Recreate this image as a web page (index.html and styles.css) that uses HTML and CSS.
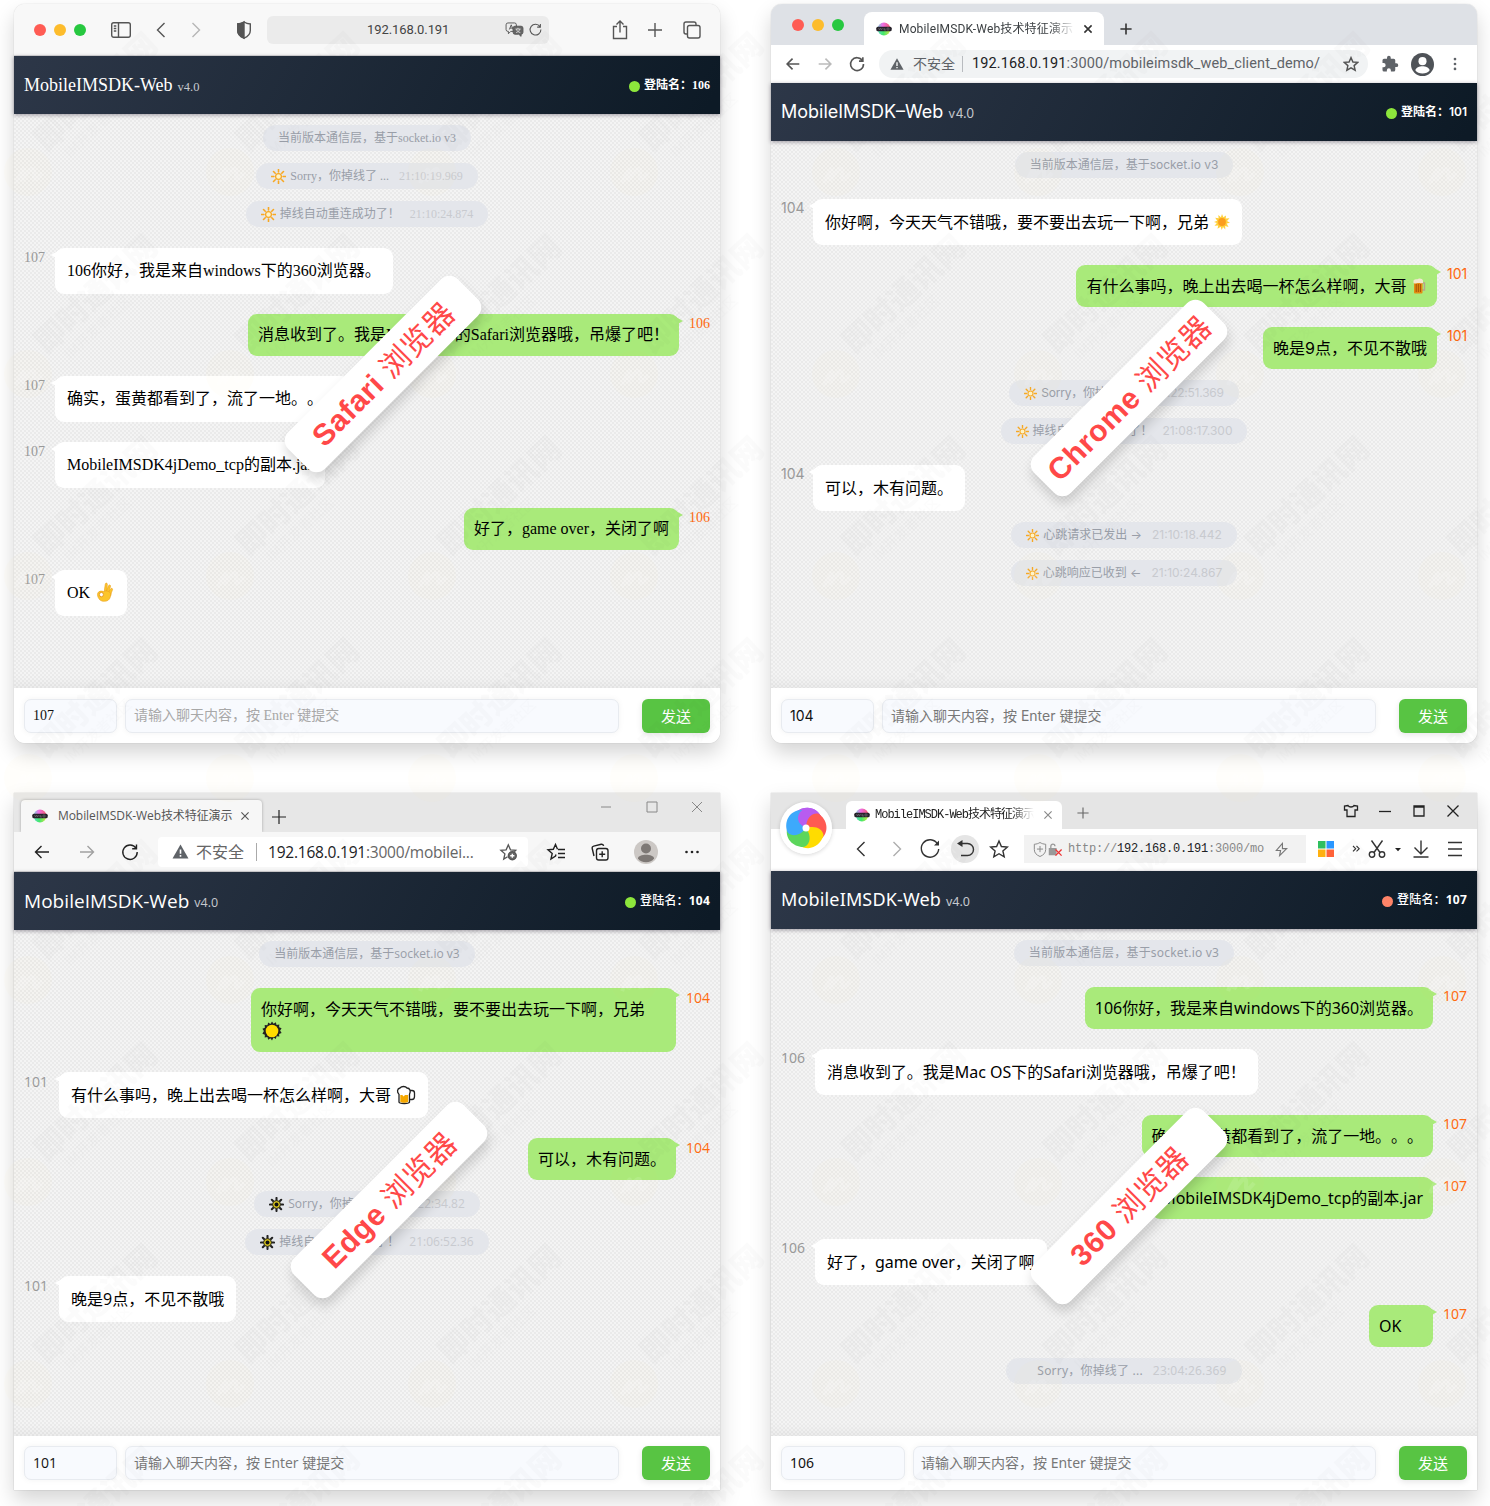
FILE: index.html
```html
<!DOCTYPE html>
<html lang="zh-CN">
<head>
<meta charset="utf-8">
<title>MobileIMSDK-Web技术特征演示</title>
<link rel="stylesheet" href="styles.css">
</head>
<body>
<svg class="defs" width="0" height="0">
  <defs>
    <linearGradient id="favtop" x1="0" y1="0" x2="1" y2="0"><stop offset="0" stop-color="#7fd0d8"/><stop offset=".4" stop-color="#ee6fe6"/><stop offset="1" stop-color="#f0586a"/></linearGradient>
    <linearGradient id="favbot" x1="0" y1="0" x2="1" y2="0"><stop offset="0" stop-color="#5fd9c8"/><stop offset=".45" stop-color="#43e86a"/><stop offset="1" stop-color="#d6e64a"/></linearGradient>
    <symbol id="favicon" viewBox="0 0 16 16"><g stroke="none"><path d="M1.500 8a6.500 6.500 0 0 1 13 0z" fill="url(#favtop)"/><path d="M1.500 8a6.500 6.500 0 0 0 13 0z" fill="url(#favbot)"/><rect x=".3" y="5.700" width="15.400" height="4.600" rx="1.500" fill="#26222a"/></g><path d="M2.500 7l1 2 1-2 1 2 1-2M8 7v2h2M8 8h1.500M11 7v2h2v-2z" stroke="#77737b" stroke-width=".6" fill="none"/></symbol>
    <symbol id="x" viewBox="0 0 20 20"><path d="M5.500 5.500l9 9M14.500 5.500l-9 9"/></symbol>
    <symbol id="plus" viewBox="0 0 20 20"><path d="M10 3v14M3 10h14"/></symbol>
    <symbol id="lt" viewBox="0 0 20 20"><path d="M13.500 3L6.500 10l7 7"/></symbol>
    <symbol id="gt" viewBox="0 0 20 20"><path d="M6.500 3l7 7-7 7"/></symbol>
    <symbol id="back" viewBox="0 0 20 20"><path d="M17 10H3.500M9.500 4l-6 6 6 6"/></symbol>
    <symbol id="fwd" viewBox="0 0 20 20"><path d="M3 10h13.500M10.500 4l6 6-6 6"/></symbol>
    <symbol id="reload" viewBox="0 0 20 20"><path d="M16 6.200A7.200 7.200 0 1 0 17.200 10M16.500 2.500v4.300h-4.300"/></symbol>
    <symbol id="star" viewBox="0 0 20 20"><path d="M10 2l2.400 5.500 6 .5-4.500 4 1.300 5.800L10 14.700l-5.200 3.100L6.100 12 1.600 8l6-.5z"/></symbol>
    <symbol id="warn" viewBox="0 0 16 16"><path d="M8 1.500L15.500 14.500H.5z" fill="#5f6368" stroke="none"/><path d="M8 6v4.200M8 11.400v1.500" stroke="#fff" stroke-width="1.500"/></symbol>
    <symbol id="glow" viewBox="0 0 16 16"><circle cx="8" cy="8" r="3.100" fill="#fdf3c8" stroke="#f7a823" stroke-width="1.300"/><path d="M8 .5v2.600M8 12.900v2.600M.5 8h2.600M12.900 8h2.600M2.700 2.700l1.800 1.800M11.500 11.500l1.800 1.800M13.300 2.700l-1.800 1.800M4.500 11.500l-1.800 1.800" stroke="#f7a823" stroke-width="1.700" stroke-linecap="round"/></symbol>
    <symbol id="glowdark" viewBox="0 0 16 16"><path d="M8 1v14M1 8h14M3 3l10 10M13 3L3 13" stroke="#222" stroke-width="2.200" stroke-linecap="round"/><circle cx="8" cy="8" r="4.200" fill="#d8c41a" stroke="#222"/><circle cx="8" cy="8" r="2.100" fill="#111"/></symbol>
  </defs>
</svg>

<main class="board">

  <!-- Safari -->
  <section class="win safari round">
    <div class="bar safari-bar">
      <div class="lights"><i class="r"></i><i class="y"></i><i class="g"></i></div>
      <svg class="ic" viewBox="0 0 20 20"><rect x=".7" y="2.700" width="18.600" height="14.600" rx="2"/><path d="M7.500 3v14M2.800 6h2.500M2.800 8.500h2.500M2.800 11h2.500"/></svg>
      <svg class="ic"><use href="#lt"/></svg>
      <svg class="ic dim"><use href="#gt"/></svg>
      <svg class="ic" viewBox="0 0 20 20"><path d="M10 2c2 1.200 4 1.800 6.300 2v6.500c0 3.500-2.500 6-6.300 7.700-3.800-1.700-6.300-4.200-6.300-7.700V4C6 3.800 8 3.200 10 2z"/><path d="M10 2v16.200c-3.800-1.700-6.300-4.200-6.300-7.700V4C6 3.800 8 3.200 10 2z" fill="#555"/></svg>
      <div class="url">
        <span>192.168.0.191</span>
        <svg class="tr" viewBox="0 0 20 16"><path d="M3 1h7a2 2 0 0 1 2 2v5a2 2 0 0 1-2 2H6l-2.500 2.500V10H3a2 2 0 0 1-2-2V3a2 2 0 0 1 2-2zM4.500 8l2-5 2 5M5.200 6.500h2.600"/><path d="M10.500 4.500h6.500a2 2 0 0 1 2 2v4.500a2 2 0 0 1-2 2v2.300L14.500 13h-4a2 2 0 0 1-2-2V6.500a2 2 0 0 1 2-2z" fill="#666"/><path d="M11 7.500h5.500M13.700 6.200v1.300M15.700 7.500c-.5 2-2 3-4 3.800M12 7.700c.5 1.800 2 3 4.200 3.600" stroke="#eee" stroke-width=".8"/></svg>
        <svg class="rl"><use href="#reload"/></svg>
      </div>
      <svg class="ic" viewBox="0 0 20 20"><path d="M7 6.500H3.500v12h13v-12H13M10 12.500V1.500M6.500 4.500L10 1l3.500 3.500"/></svg>
      <svg class="ic"><use href="#plus"/></svg>
      <svg class="ic" viewBox="0 0 20 20"><rect x="5.500" y="5.500" width="12.500" height="12.500" rx="2"/><path d="M5.500 14H4a2 2 0 0 1-2-2V4a2 2 0 0 1 2-2h8a2 2 0 0 1 2 2v1.500"/></svg>
    </div>
    <header class="top"><h1>MobileIMSDK-Web</h1><small>v4.0</small><div class="who"><i></i>登陆名：<b>106</b></div></header>
    <div class="chat">
      <div class="note">当前版本通信层，基于socket.io v3</div>
      <div class="note"><svg><use href="#glow"/></svg>Sorry，你掉线了 ...<time>21:10:19.969</time></div>
      <div class="note"><svg><use href="#glow"/></svg>掉线自动重连成功了！<time>21:10:24.874</time></div>
      <div class="msg in"><span>107</span><p>106你好，我是来自windows下的360浏览器。</p></div>
      <div class="msg out"><p>消息收到了。我是Mac OS下的Safari浏览器哦，吊爆了吧！</p><span>106</span></div>
      <div class="msg in"><span>107</span><p>确实，蛋黄都看到了，流了一地。。。</p></div>
      <div class="msg in"><span>107</span><p>MobileIMSDK4jDemo_tcp的副本.jar</p></div>
      <div class="msg out"><p>好了，game over，关闭了啊</p><span>106</span></div>
      <div class="msg in"><span>107</span><p>OK <svg class="em" viewBox="0 0 20 20"><g fill="#fcc52b" stroke="#e9a01f" stroke-width=".6" stroke-linejoin="round"><path d="M9.200 9.500L10.300 2c.3-1.300 2-1.200 2 .2L12 9z"/><path d="M11.300 9.500L13.600 3.600c.6-1.200 2.200-.6 1.900.7L14 10.500z"/><path d="M13 10.500l2.800-3.700c.8-1 2.200-.1 1.700 1-.9 2-1.500 4-1.800 6z"/><path d="M8.500 9.500c2-.9 4.700-.8 6.500.8.900 1 .8 3 .3 4.700-.8 3-3 4.300-6 4.300-2.600 0-4.600-.9-5.500-2.800-1-1.500-1.800-3.700-1-5.500C3.800 9 6.300 8.700 8.500 9.500z"/></g><ellipse cx="6.400" cy="12.600" rx="2" ry="2.200" fill="#fff" stroke="#e08e19" stroke-width=".8"/></svg></p></div>
    </div>
    <footer class="send"><div class="f id">107</div><div class="f text">请输入聊天内容，按 Enter 键提交</div><button>发送</button></footer>
    <div class="tag"><b>Safari</b> 浏览器</div>
  </section>

  <!-- Chrome -->
  <section class="win chrome round">
    <div class="tabs chrome-tabs">
      <div class="lights"><i class="r"></i><i class="y"></i><i class="g"></i></div>
      <div class="tab"><svg class="fi"><use href="#favicon"/></svg><span class="fade">MobileIMSDK-Web技术特征演示</span><svg class="cl"><use href="#x"/></svg></div>
      <svg class="add"><use href="#plus"/></svg>
    </div>
    <div class="bar chrome-bar">
      <svg class="ic"><use href="#back"/></svg>
      <svg class="ic dim"><use href="#fwd"/></svg>
      <svg class="ic"><use href="#reload"/></svg>
      <div class="url"><svg class="wn"><use href="#warn"/></svg><em>不安全</em><span><b>192.168.0.191</b>:3000/mobileimsdk_web_client_demo/</span><svg class="st"><use href="#star"/></svg></div>
      <svg class="ic" viewBox="0 0 24 24"><path d="M20.500 11H19V7a2 2 0 0 0-2-2h-4V3.500a2.500 2.500 0 0 0-5 0V5H4a2 2 0 0 0-2 2v3.800h1.500a2.700 2.700 0 0 1 0 5.400H2V20a2 2 0 0 0 2 2h3.800v-1.500a2.700 2.700 0 0 1 5.400 0V22H17a2 2 0 0 0 2-2v-4h1.500a2.500 2.500 0 0 0 0-5z" fill="#5f6368" stroke="none"/></svg>
      <svg class="ic av" viewBox="0 0 24 24"><circle cx="12" cy="12" r="12" fill="#4f5358" stroke="none"/><circle cx="12" cy="8.500" r="4.200" fill="#fff" stroke="none"/><path d="M4.500 18c1.500-5.500 13.500-5.500 15 0-3 4.500-12 4.500-15 0z" fill="#fff" stroke="none"/></svg>
      <svg class="ic" viewBox="0 0 20 20"><g fill="#5f6368" stroke="none"><circle cx="10" cy="4.500" r="1.500"/><circle cx="10" cy="10" r="1.500"/><circle cx="10" cy="15.500" r="1.500"/></g></svg>
    </div>
    <header class="top"><h1>MobileIMSDK–Web</h1><small>v4.0</small><div class="who"><i></i>登陆名：<b>101</b></div></header>
    <div class="chat">
      <div class="note">当前版本通信层，基于socket.io v3</div>
      <div class="msg in"><span>104</span><p>你好啊，今天天气不错哦，要不要出去玩一下啊，兄弟 <svg class="em sm" viewBox="0 0 16 16"><path d="M8 0l1.300 3.200L12 1.500l-.3 3.100 3.800-.3L13 7l3 1.700-3.300.9 1.800 3.400-3.300-1 .1 3.500L9 13l-1.300 3-1-3.200-3.200 2 .7-3.400-3.700.4 2.400-2.700L0 8l3.200-1.300L1.200 3.800l3.400.5L4.300 1l2.600 2.200z" fill="#ffd03c"/><circle cx="8" cy="8" r="3.900" fill="#fb9d1d"/></svg></p></div>
      <div class="msg out"><p>有什么事吗，晚上出去喝一杯怎么样啊，大哥 <svg class="em sm" viewBox="0 0 16 16"><path d="M11 5h2.500v7H11" fill="none" stroke="#b9a38c" stroke-width="1.400"/><rect x="3" y="3.500" width="8.500" height="12" rx="1" fill="#e38c12"/><path d="M5.200 6v8M7.300 6v8M9.400 6v8" stroke="#a64d06" stroke-width="1"/><path d="M2.500 5V2.500C4 .5 5.500 1.500 7 1c2-1 4.500-.3 5 1.500V5c-2 1-2.500-.5-5 0-2 .5-3 .8-4.500 0z" fill="#f3e7cf"/></svg></p><span>101</span></div>
      <div class="msg out"><p>晚是9点，不见不散哦</p><span>101</span></div>
      <div class="note tight"><svg><use href="#glow"/></svg>Sorry，你掉线了 ...<time>20:22:51.369</time></div>
      <div class="note"><svg><use href="#glow"/></svg>掉线自动重连成功了！<time>21:08:17.300</time></div>
      <div class="msg in"><span>104</span><p>可以，木有问题。</p></div>
      <div class="note"><svg><use href="#glow"/></svg>心跳请求已发出 →<time>21:10:18.442</time></div>
      <div class="note"><svg><use href="#glow"/></svg>心跳响应已收到 ←<time>21:10:24.867</time></div>
    </div>
    <footer class="send"><div class="f id">104</div><div class="f text">请输入聊天内容，按 Enter 键提交</div><button>发送</button></footer>
    <div class="tag"><b>Chrome</b> 浏览器</div>
  </section>

  <!-- Edge -->
  <section class="win edge">
    <div class="tabs edge-tabs">
      <div class="tab"><svg class="fi"><use href="#favicon"/></svg><span>MobileIMSDK-Web技术特征演示</span><svg class="cl"><use href="#x"/></svg></div>
      <svg class="add"><use href="#plus"/></svg>
      <div class="ctl">
        <svg viewBox="0 0 20 20"><path d="M5 10h10"/></svg>
        <svg viewBox="0 0 20 20"><path d="M5 5h10v10H5z"/></svg>
        <svg viewBox="0 0 20 20"><path d="M5 5l10 10M15 5L5 15"/></svg>
      </div>
    </div>
    <div class="bar edge-bar">
      <svg class="ic"><use href="#back"/></svg>
      <svg class="ic dim"><use href="#fwd"/></svg>
      <svg class="ic"><use href="#reload"/></svg>
      <div class="url"><svg class="wn"><use href="#warn"/></svg><em>不安全</em><span><b>192.168.0.191</b>:3000/mobilei...</span><svg class="st" viewBox="0 0 20 20"><path d="M9 15.500L5 18l1.200-5.500L2 8.800l5.500-.5L9.800 3l2.300 5.300 5.500.5-1.500 1.500"/><circle cx="14" cy="14.500" r="4.200" fill="#666"/><path d="M14 12.300v4.400M11.800 14.500h4.400" stroke="#fff"/></svg></div>
      <svg class="ic" viewBox="0 0 20 20"><path d="M10 12.500l-.5 1.500-4.500 3 1.200-5.500L2 7.800l5.300-.5L9.500 2.500l2 4.800M12 7.500h7M12 11.500h7M12 15.500h7"/></svg>
      <svg class="ic" viewBox="0 0 20 20"><rect x="6.500" y="6.500" width="11.500" height="11.500" rx="2.200"/><path d="M12.200 9.300v6M9.200 12.300h6M4 14l-1.800-7.500a2 2 0 0 1 1.500-2.400l7.500-1.800a2 2 0 0 1 2.400 1.600"/></svg>
      <svg class="ic av" viewBox="0 0 24 24"><circle cx="12" cy="12" r="12" fill="#ccc8c5" stroke="none"/><circle cx="12" cy="8.500" r="5" fill="#7d7875" stroke="none"/><path d="M4 18.500c0-5 16-5 16 0-3 5-13 5-16 0z" fill="#7d7875" stroke="none"/></svg>
      <svg class="ic" viewBox="0 0 20 20"><g fill="#222" stroke="none"><circle cx="4.500" cy="10" r="1.300"/><circle cx="10" cy="10" r="1.300"/><circle cx="15.500" cy="10" r="1.300"/></g></svg>
    </div>
    <header class="top"><h1>MobileIMSDK-Web</h1><small>v4.0</small><div class="who"><i></i>登陆名：<b>104</b></div></header>
    <div class="chat">
      <div class="note">当前版本通信层，基于socket.io v3</div>
      <div class="msg out"><p>你好啊，今天天气不错哦，要不要出去玩一下啊，兄弟 <br><svg class="em" viewBox="0 0 20 20"><path d="M10 .5l1.600 2.200 2.200-1.500.8 2.700 2.700-.3-.2 2.700 2.500 1-1.500 2.300 1.500 2.300-2.500 1 .2 2.700-2.700-.3-.8 2.700-2.200-1.500L10 19.500l-1.600-2.200-2.200 1.500-.8-2.700-2.700.3.200-2.700-2.500-1L1.900 10 .4 7.700l2.500-1-.2-2.700 2.700.3.800-2.700 2.200 1.500z" fill="#222"/><circle cx="10" cy="10" r="6.300" fill="#ffdb00"/></svg></p><span>104</span></div>
      <div class="msg in"><span>101</span><p>有什么事吗，晚上出去喝一杯怎么样啊，大哥 <svg class="em" viewBox="0 0 20 20"><path d="M13.500 5.500H16c1.500 0 2.500 1 2.500 2.500v3.500c0 2-1 3-2.500 3h-2.500" fill="none" stroke="#222" stroke-width="1.300"/><path d="M3 7v10c0 2 10.500 2 10.500 0V7z" fill="#fff" stroke="#222" stroke-width="1.300"/><path d="M4.300 10h2l1.300 1.500L9 10h3.200v7c-2 .9-6 .9-7.900 0z" fill="#f5a800"/><path d="M3 9C.8 7.500 1 3.500 4 3c1.500-2 5.500-2 7 0 3 0 4 3.500 2.500 6" fill="#fff" stroke="#222" stroke-width="1.300"/></svg></p></div>
      <div class="msg out"><p>可以，木有问题。</p><span>104</span></div>
      <div class="note"><svg><use href="#glowdark"/></svg>Sorry，你掉线了 ...<time>20:22:34.82</time></div>
      <div class="note"><svg><use href="#glowdark"/></svg>掉线自动重连成功了！<time>21:06:52.36</time></div>
      <div class="msg in"><span>101</span><p>晚是9点，不见不散哦</p></div>
    </div>
    <footer class="send"><div class="f id">101</div><div class="f text">请输入聊天内容，按 Enter 键提交</div><button>发送</button></footer>
    <div class="tag"><b>Edge</b> 浏览器</div>
  </section>

  <!-- 360 -->
  <section class="win q360">
    <svg class="logo" viewBox="-26 -26 52 52"><circle r="26" fill="#fff"/>
      <path id="petal" d="M0 0C-9-3-13-10-10-16-2-23 12-22 16-9 9-14 1-10 0 0z" fill="#b85cf0"/>
      <use href="#petal" class="p2"/>
      <path d="M0 0C-9-3-13-10-10-16-2-23 12-22 16-9 9-14 1-10 0 0z" fill="#ff5a52" transform="rotate(72)"/>
      <path d="M0 0C-9-3-13-10-10-16-2-23 12-22 16-9 9-14 1-10 0 0z" fill="#ffdc00" transform="rotate(144)"/>
      <path d="M0 0C-9-3-13-10-10-16-2-23 12-22 16-9 9-14 1-10 0 0z" fill="#5cd65c" transform="rotate(216)"/>
      <path d="M0 0C-9-3-13-10-10-16-2-23 12-22 16-9 9-14 1-10 0 0z" fill="#3da9fc" transform="rotate(288)"/>
      <circle r="3.500" fill="#fff"/></svg>
    <div class="tabs q-tabs">
      <div class="tab"><svg class="fi"><use href="#favicon"/></svg><span class="fade">MobileIMSDK-Web技术特征演示</span><svg class="cl"><use href="#x"/></svg></div>
      <svg class="add"><use href="#plus"/></svg>
      <div class="ctl">
        <svg viewBox="0 0 20 20"><path d="M7 4.500L3.500 5v4H6v6.500h8V9h2.500V5L13 4.500c-1 2-5 2-6 0z"/></svg>
        <svg viewBox="0 0 20 20"><path d="M4 10.500h12"/></svg>
        <svg viewBox="0 0 20 20"><path d="M5 5h10v10H5zM5 6h10"/></svg>
        <svg viewBox="0 0 20 20"><path d="M4.500 4.500l11 11M15.500 4.500l-11 11"/></svg>
      </div>
    </div>
    <div class="bar q-bar">
      <svg class="ic"><use href="#lt"/></svg>
      <svg class="ic dim"><use href="#gt"/></svg>
      <svg class="ic" viewBox="0 0 20 20"><path d="M17.500 5A8.700 8.700 0 1 0 18.700 10"/><path d="M19 1.500v5h-5z" fill="#333" stroke="none"/></svg>
      <svg class="ic undo" viewBox="0 0 20 20"><path d="M4 4.500h8.500a5.500 5.500 0 0 1 0 12H6"/><path d="M2 4.500L7.500 1v7z" fill="#333" stroke="none"/></svg>
      <svg class="ic"><use href="#star"/></svg>
      <div class="url"><svg class="sh" viewBox="0 0 16 18"><path d="M8 1c2 1.300 4 1.800 6.500 2v6c0 4-2.500 6.300-6.500 8-4-1.700-6.500-4-6.500-8V3C4 2.800 6 2.300 8 1zM8 5v7M4.500 8.500h7"/></svg><svg class="lk" viewBox="0 0 16 16"><path d="M1.500 7h7v6.500h-7z" fill="#999" stroke="#999"/><path d="M3 7V4.500a2.200 2.200 0 0 1 4.400 0" stroke="#999"/><path d="M8 8l6.500 6.500M14.500 8L8 14.500" stroke="#e33" stroke-width="1.400"/></svg><span>http://<b>192.168.0.191</b>:3000/mo</span><svg class="bolt" viewBox="0 0 16 16"><path d="M9 1.500L2.500 9H7l-1 5.500L13.500 7H9z"/></svg></div>
      <svg class="ic" viewBox="0 0 20 20"><g stroke="none"><path d="M2 2h7.500v7.500H2z" fill="#2fbf5f"/><path d="M10.500 2H18v7.500h-7.500z" fill="#2a97ff"/><path d="M2 10.500h7.500V18H2z" fill="#ffb010"/><path d="M10.500 10.500H18V18h-7.500z" fill="#ff6238"/></g></svg>
      <svg class="ic thin" viewBox="0 0 20 20"><path d="M7 7l2.700 2.700L7 12.400M10.500 7l2.700 2.700-2.700 2.700"/></svg>
      <svg class="ic" viewBox="0 0 20 20"><path d="M4.500 1.500l8.500 12M15.500 1.500L7 13.500"/><circle cx="5" cy="15.500" r="2.700"/><circle cx="15" cy="15.500" r="2.700"/></svg>
      <svg class="ic" viewBox="0 0 20 20"><path d="M7 9h6l-3 3.200z" fill="#222" stroke="none"/></svg>
      <svg class="ic" viewBox="0 0 20 20"><path d="M10 1.500v13M3.500 8.500L10 15l6.500-6.500M2.500 18h15"/></svg>
      <svg class="ic" viewBox="0 0 20 20"><path d="M3 3.500h14M3 10h14M3 16.500h14"/></svg>
    </div>
    <header class="top"><h1>MobileIMSDK-Web</h1><small>v4.0</small><div class="who"><i></i>登陆名：<b>107</b></div></header>
    <div class="chat">
      <div class="note">当前版本通信层，基于socket.io v3</div>
      <div class="msg out"><p>106你好，我是来自windows下的360浏览器。</p><span>107</span></div>
      <div class="msg in"><span>106</span><p>消息收到了。我是Mac OS下的Safari浏览器哦，吊爆了吧！</p></div>
      <div class="msg out"><p>确实，蛋黄都看到了，流了一地。。。</p><span>107</span></div>
      <div class="msg out"><p>MobileIMSDK4jDemo_tcp的副本.jar</p><span>107</span></div>
      <div class="msg in"><span>106</span><p>好了，game over，关闭了啊</p></div>
      <div class="msg out"><p class="ok">OK</p><span>107</span></div>
      <div class="note blank">Sorry，你掉线了 ...<time>23:04:26.369</time></div>
    </div>
    <footer class="send"><div class="f id">106</div><div class="f text">请输入聊天内容，按 Enter 键提交</div><button>发送</button></footer>
    <div class="tag"><b>360</b> 浏览器</div>
  </section>
</main>

<svg class="mark" width="1490" height="1506">
  <defs>
    <pattern id="wm" width="202" height="202" patternUnits="userSpaceOnUse" patternTransform="translate(28 -28)">
      <g transform="translate(16 168) rotate(-43)"><text x="-7" y="11" font-size="31" font-weight="900" fill="#000" fill-opacity=".016">即时通讯网</text></g>
      <g transform="translate(42 186) rotate(-43)"><text font-size="14" fill="#000" fill-opacity=".012">IM开发者社区</text></g>
    </pattern>
    <pattern id="wc" width="202" height="202" patternUnits="userSpaceOnUse" patternTransform="translate(-72 71)">
      <circle cx="100" cy="101" r="24" fill="#e9d84a" fill-opacity=".025"/><path d="M88 112q12-26 6-2q14-22 12-4q0 6 8-4" fill="none" stroke="#fff" stroke-width="4" stroke-opacity=".1"/>
    </pattern>
  </defs>
  <rect width="1490" height="1506" fill="url(#wm)"/>
  <rect width="1490" height="1506" fill="url(#wc)"/>
</svg>
</body>
</html>
```
FILE: styles.css
```css
* { box-sizing: border-box; }
body { margin: 0; width: 1490px; height: 1506px; overflow: hidden; position: relative; background: #fff; text-spacing-trim: space-all; }
.defs { position: absolute; }
svg { display: block; flex: none; overflow: visible; }
h1, p { margin: 0; font-weight: 400; }
em { font-style: normal; }

.board { display: grid; grid-template-columns: 706px 706px; grid-template-rows: 739px 697px; column-gap: 51px; row-gap: 50px; padding: 4px 0 0 14px; }
.win { position: relative; display: flex; flex-direction: column; background: #fff; box-shadow: 0 0 1px rgba(0,0,0,.28), 0 10px 20px rgba(0,0,0,.17); }
.round { border-radius: 11px; }
.mark { position: absolute; left: 0; top: 0; pointer-events: none; font-family: "Noto Sans CJK SC", sans-serif; }

.safari { font-family: "Liberation Serif", "Noto Sans CJK SC", serif; --in: 21px; --out: 21px; }
.chrome { font-family: "Inter", "Noto Sans CJK SC", sans-serif; --in: 22px; --out: 20px; }
.edge { font-family: "Open Sans", "Noto Sans CJK SC", sans-serif; --in: 25px; --out: 24px; }
.q360 { font-family: "Noto Sans", "Noto Sans CJK SC", sans-serif; --in: 24px; --out: 24px; }

/* window chrome */
.lights { display: flex; gap: 8px; }
.lights i { width: 12px; height: 12px; border-radius: 50%; }
.lights .r { background: #ff5c54; }
.lights .y { background: #fdbc2c; }
.lights .g { background: #27c840; }
.bar { display: flex; align-items: center; flex: none; }
.ic { width: 20px; height: 20px; }
.bar svg, .tabs svg { fill: none; stroke: #555; stroke-width: 1.4; }
.bar .dim { opacity: .4; }
.url { display: flex; align-items: center; flex: none; white-space: nowrap; }
.url b { font-weight: 400; color: #202124; }
.tabs { display: flex; flex: none; }
.tab { display: flex; align-items: center; white-space: nowrap; overflow: hidden; }
.fi { width: 16px; height: 16px; }
.fade { overflow: hidden; -webkit-mask-image: linear-gradient(90deg, #000 85%, transparent); mask-image: linear-gradient(90deg, #000 85%, transparent); }

.safari-bar { height: 52px; padding-left: 20px; background: #f8f8f8; border-radius: 11px 11px 0 0; border-bottom: 1px solid #dcdcdc; }
.safari-bar > :nth-child(2) { margin-left: 25px; }
.safari-bar > :nth-child(3) { margin-left: 20px; }
.safari-bar > :nth-child(4) { margin-left: 15px; }
.safari-bar > :nth-child(5) { margin-left: 28px; }
.safari-bar .url { width: 282px; height: 28px; margin-left: 13px; padding-left: 100px; background: #ebebeb; border-radius: 6px; font: 13px/30px "Roboto", sans-serif; color: #444; }
.safari-bar .url span { width: 83px; letter-spacing: -.08px; }
.safari-bar .tr { width: 19px; height: 15px; margin-left: 55px; stroke-width: 1; }
.safari-bar .rl { width: 15px; height: 15px; margin-left: 4px; }
.safari-bar > :nth-child(7) { margin-left: 61px; }
.safari-bar > :nth-child(8) { margin-left: 15px; }
.safari-bar > :nth-child(9) { margin-left: 17px; }

.chrome-tabs { height: 41px; padding: 8px 0 0 21px; background: #dee1e6; border-radius: 11px 11px 0 0; }
.chrome-tabs .lights { padding-top: 7px; }
.chrome-tabs .tab { width: 240px; margin-left: 20px; padding-left: 12px; background: #fff; border-radius: 8px 8px 0 0; font: 12px/20px "Roboto", "Noto Sans CJK SC", sans-serif; color: #3c4043; }
.chrome-tabs .tab span { width: 176px; margin-left: 7px; letter-spacing: .15px; }
.cl { width: 16px; height: 16px; margin-left: 5px; }
.chrome-tabs .add { width: 16px; height: 16px; margin: 9px 0 0 14px; stroke-width: 2; stroke: #333; }
.chrome-tabs .cl { stroke-width: 2; stroke: #333; }
.chrome-bar { height: 38px; padding-left: 12px; gap: 12px; }
.chrome-bar .ic { width: 20px; height: 18px; stroke-width: 1.8; }
.chrome-bar .av { height: 23px; width: 23px; margin: 0 -1px 0 -1px; }
.chrome-bar .url { width: 489px; height: 28px; padding-left: 11px; background: #f1f3f4; border-radius: 14px; font: 14.5px/28px "Roboto", "Noto Sans CJK SC", sans-serif; color: #5f6368; }
.chrome-bar .wn { width: 14px; height: 14px; }
.chrome-bar em { width: 50px; margin-left: 9px; font-size: 14px; line-height: 16px; border-right: 1px solid #b8bbbf; }
.chrome-bar .url span { width: 362px; margin-left: 9px; letter-spacing: .12px; }
.chrome-bar .st { width: 16px; height: 16px; margin-left: 9px; stroke-width: 1.8; }

.edge-tabs { height: 39px; padding: 7px 0 0 7px; background: #e7e7e7; }
.edge-tabs .tab { width: 241px; padding-left: 11px; background: #f7f7f7; border-radius: 4px 4px 0 0; box-shadow: 0 0 3px rgba(0,0,0,.3); font-size: 12px; line-height: 20px; color: #555; clip-path: inset(-4px -4px 0 -4px); }
.edge-tabs .tab span { width: 174px; margin-left: 10px; letter-spacing: -.07px; }
.edge-tabs .add { width: 20px; height: 20px; margin: 7px 0 0 7px; stroke-width: 1.2; stroke: #222; }
.ctl { display: flex; }
.ctl svg { width: 20px; height: 20px; stroke-width: 1; }
.edge-tabs .ctl { gap: 25.5px; margin: -3px 0 0 307px; }
.edge-tabs .ctl svg { stroke: #888; }
.edge-bar { height: 40px; padding-left: 18px; background: #f7f7f7; border-bottom: 1px solid #d8d8d8; }
.edge-bar .ic { stroke: #222; }
.edge-bar > :nth-child(2) { margin-left: 25px; }
.edge-bar > :nth-child(3) { margin-left: 23px; }
.edge-bar .url { width: 370px; height: 30px; margin-left: 18px; padding-left: 14px; background: #fff; border-radius: 4px; font-size: 16px; line-height: 28px; color: #666; }
.edge-bar .wn { width: 17px; height: 17px; }
.edge-bar em { width: 61px; margin-left: 7px; line-height: 18px; border-right: 1px solid #aaa; }
.edge-bar .url span { width: 220px; margin-left: 11px; font-size: 15.5px; letter-spacing: -.22px; }
.edge-bar .st { width: 19px; height: 19px; margin-left: 11px; }
.edge-bar > :nth-child(5) { margin-left: 18px; }
.edge-bar > :nth-child(6) { margin-left: 24px; }
.edge-bar > .av { width: 24px; height: 24px; margin: 0 -2px 0 24px; }
.edge-bar > :nth-child(8) { margin-left: 26px; }

.logo { position: absolute; left: 9px; top: 9px; width: 52px; height: 52px; border-radius: 50%; box-shadow: 0 1px 4px rgba(0,0,0,.16); }
.q-tabs { height: 36px; padding: 8px 0 0 75px; background: #e5e5e5; }
.q-tabs .tab { width: 216px; padding-left: 8px; background: #fff; border-radius: 6px 6px 0 0; font: 12px/20px "Liberation Mono", "Noto Sans CJK SC", monospace; color: #222; }
.q-tabs .tab span { width: 159px; margin-left: 5px; font-family: "Liberation Mono", "Noto Sans CJK SC", monospace; letter-spacing: -1px; }
.q-tabs .cl { stroke: #888; margin-left: 6px; }
.q-tabs .add { width: 16px; height: 16px; margin: 4px 0 0 13px; stroke: #666; }
.q-tabs .ctl { gap: 14px; margin: 0 0 0 250px; }
.q-tabs .ctl svg { stroke: #222; stroke-width: 1.3; }
.q-bar { height: 42px; padding: 0 0 2px 80px; }
.q-bar .ic { stroke: #333; }
.q-bar > :nth-child(2) { margin-left: 16px; }
.q-bar > :nth-child(3) { margin-left: 13px; }
.q-bar > .undo { width: 28px; height: 28px; padding: 4px; margin: 0 -4px 0 11px; background: #e5e5e5; border-radius: 50%; }
.q-bar > :nth-child(5) { margin-left: 14px; }
.q-bar .url { width: 282px; height: 28px; margin-left: 15px; padding-left: 9px; background: #f2f2f2; font: 12px/28px "Liberation Mono", monospace; color: #888; }
.q-bar .sh { width: 14px; height: 17px; stroke: #888; stroke-width: 1.1; }
.q-bar .lk { width: 15px; height: 15px; margin-left: 1px; }
.q-bar .url span { width: 208px; margin-left: 5px; letter-spacing: -.2px; }
.q-bar .bolt { width: 15px; height: 15px; stroke: #777; stroke-width: 1.2; margin-left: -2px; }
.q-bar .thin { stroke-width: 1.1; }
.q-bar > :nth-child(7), .q-bar > :nth-child(8) { margin-left: 10px; }
.q-bar > :nth-child(9), .q-bar > :nth-child(10) { margin-left: 1px; }
.q-bar > :nth-child(11) { margin-left: 3px; }
.q-bar > :nth-child(12) { margin-left: 14px; }

/* demo page header */
.top { display: flex; align-items: center; flex: none; height: 58px; padding: 0 10px; background: linear-gradient(118deg, #2d3748, #0d1a26 98%); color: #fff; box-shadow: 0 1px 4px rgba(30,20,40,.4); z-index: 1; }
.top h1 { font-size: 18px; line-height: 24px; }
.top small { margin: 3px 0 0 5px; font-size: 12.5px; line-height: 20px; color: #c6c9ce; }
.edge .top h1 { font-size: 19px; letter-spacing: .05px; }
.q360 .top h1 { letter-spacing: .15px; margin-top: -3px; }
.who { display: flex; align-items: center; margin-left: auto; font-size: 12px; font-weight: 700; line-height: 20px; }
.chrome .who b { font-weight: 600; }
.who i { width: 11px; height: 11px; margin: 2px 4px 0 0; border-radius: 50%; background: #8de63c; }
.q360 .who, .edge .who { font-weight: 500; letter-spacing: .2px; }
.who b { font-weight: 700; }
.q360 .who i { background: #ff8468; }

/* conversation */
.chat { flex: 1; padding: 11px 10px 0; overflow: hidden; background: conic-gradient(#eaeaea 25%, #f4f4f4 0 50%, #eaeaea 0 75%, #f4f4f4 0) 0 0 / 4px 4px; display: flex; flex-direction: column; box-shadow: inset 0 -12px 14px -10px rgba(0,0,0,.06); }
.note { display: flex; align-items: center; align-self: center; flex: none; height: 26px; margin-bottom: 12px; padding: 0 15px; border-radius: 13px; background: #e4e6eb; color: #999ea8; font-size: 12px; line-height: 26px; white-space: pre; }
.note svg { width: 15px; height: 15px; margin-right: 4px; fill: none; }
.chrome .note svg { width: 13px; height: 13px; }
.chrome .note.tight { letter-spacing: -.25px; }
.note time { margin-left: 10px; color: #c8cacf; }
.q360 .note { letter-spacing: .2px; }
.note.blank { padding-left: 31px; }
.msg { display: flex; flex: none; gap: 10px; margin: 9px 0 11px; }
.msg span { font-size: 14px; line-height: 18px; color: #999; }
.safari .msg span { padding-top: 1px; }
.msg.in span { width: var(--in); }
.msg.out { justify-content: flex-end; }
.msg.out span { width: var(--out); color: #ff6a10; }
.edge .msg span { line-height: 20px; }
.msg p { position: relative; padding: 12px; border-radius: 9px; background: #fff; font-size: 16px; line-height: 22px; color: #000; white-space: nowrap; }
.msg.out p { padding: 10px; background: #a9ea7a; }
.q360 .msg p { letter-spacing: -.03px; }
.msg p::before { content: ""; position: absolute; top: 3px; left: -4px; border: 4px solid transparent; border-left-width: 0; border-right: 7px solid #fff; }
.msg.out p::before { left: auto; right: -4px; border: 4px solid transparent; border-right-width: 0; border-left: 7px solid #a9ea7a; }
.msg .em { display: inline-block; width: 20px; height: 20px; vertical-align: -4px; margin-left: 1px; }
.msg .em.sm { width: 16px; height: 16px; vertical-align: -2px; margin: 0; }
.edge .msg.out:nth-child(2) p { width: 425px; }
.msg .ok { width: 64px; }

/* composer */
.send { display: flex; flex: none; height: 55px; padding: 11px 10px 0; background: #fff; border-radius: 0 0 11px 11px; }
.edge .send, .q360 .send { height: 54px; padding-top: 10px; border-radius: 0; }
.f { height: 34px; padding-left: 8px; border: 1px solid #e8ebf0; border-radius: 7px; background: #f8fafe; box-shadow: 0 0 6px rgba(0,0,0,.05); font-size: 14px; line-height: 32px; color: #111; }
.id { width: 93px; }
.text { width: 494px; margin-left: 8px; color: #777; white-space: pre; }
.safari .text { color: #a8a8a8; }
.q360 .id { width: 124px; }
.q360 .text { width: 463px; padding-left: 7px; }
.send button { width: 68px; height: 34px; margin-left: auto; padding: 0; border: 0; border-radius: 6px; background: #58c443; color: #fff; font: 15px/34px "Noto Sans CJK SC", sans-serif; box-shadow: 0 2px 6px rgba(0,0,0,.1); }

/* rotated caption over each window */
.tag { position: absolute; z-index: 2; width: 240px; height: 52px; left: 249px; top: 344px; border-radius: 12px; background: #fff; box-shadow: -4px 6px 12px rgba(0,0,0,.16); transform: rotate(-45deg); text-align: center; white-space: nowrap; font: 400 30px/54px "Liberation Sans", "Noto Sans CJK SC", sans-serif; color: #ff4848; letter-spacing: .6px; }
.chrome .tag { left: 238px; top: 368px; }
.edge .tag { left: 255px; top: 381px; }
.q360 .tag { left: 238px; top: 387px; }
```
